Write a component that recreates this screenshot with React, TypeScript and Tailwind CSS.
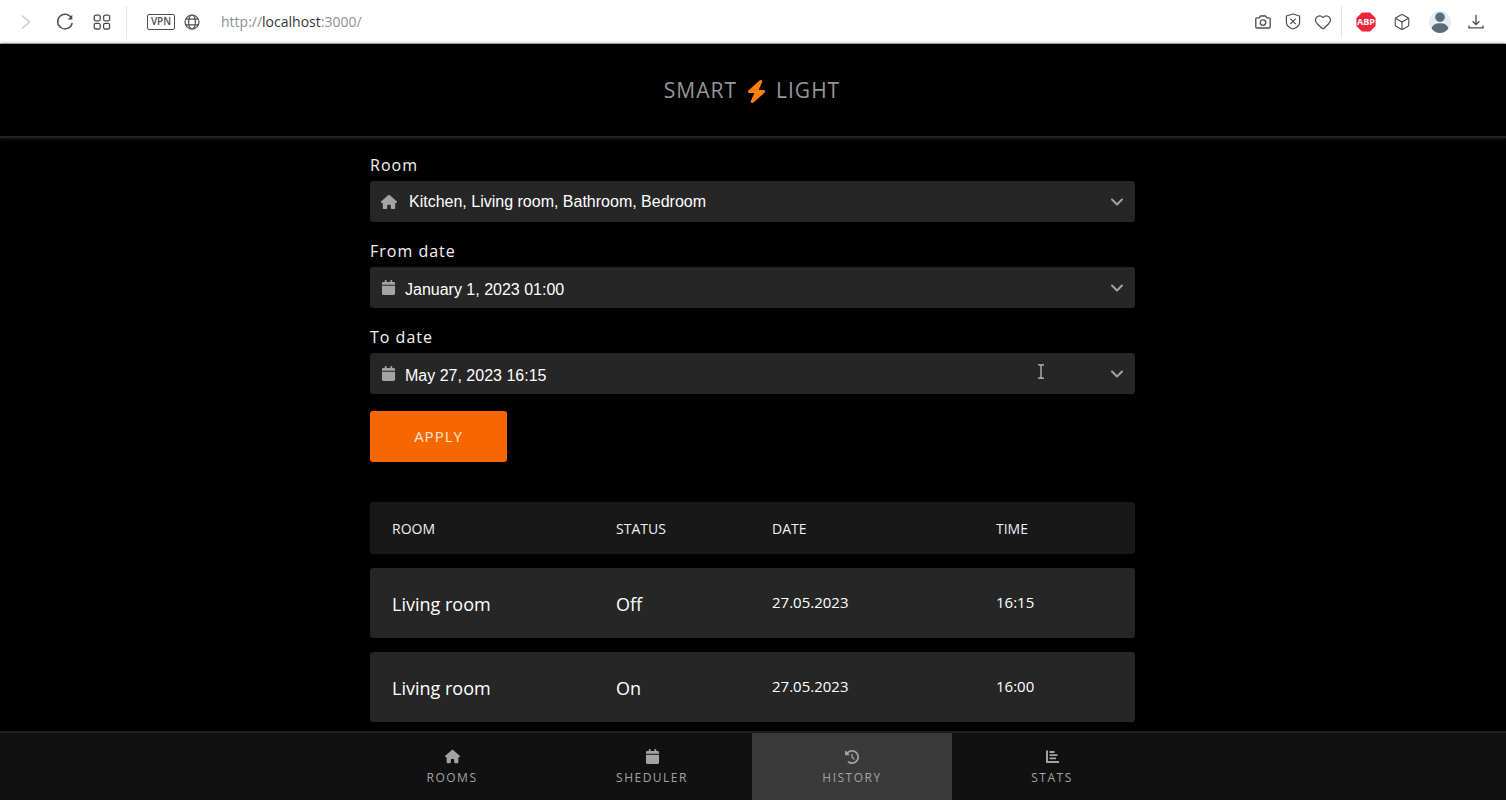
import type { ReactNode } from "react";
import { FaBolt, FaCalendar, FaClockRotateLeft, FaHouse } from "react-icons/fa6";
import { Box, ChevronDown, Heart } from "lucide-react";

const history = [
  { room: "Living room", status: "Off", date: "27.05.2023", time: "16:15" },
  { room: "Living room", status: "On", date: "27.05.2023", time: "16:00" },
];

function BrowserBar() {
  return (
    <div className="flex h-11 shrink-0 items-center justify-between border-b border-[#c4c4c4] bg-white pr-5 pl-4 text-[#4a4d52]">
      <div className="flex items-center">
        <button aria-label="Forward" className="flex h-5 w-5 items-center justify-center">
          <svg width="10" height="16" viewBox="0 0 10 16" fill="none" stroke="#c9c9c9" strokeWidth="1.3">
            <path d="M1 1.5 8.5 8 1 14.5" />
          </svg>
        </button>
        <button aria-label="Reload" className="ml-5 flex h-5 w-[18px] items-center justify-center">
          <svg width="18" height="18" viewBox="0 0 18 18" fill="none" stroke="currentColor" strokeWidth="1.4">
            <path d="M15.6 5.4A7.3 7.3 0 1 0 16.2 10" />
            <path d="M16.3 1.8v4.6h-4.6z" fill="currentColor" stroke="none" />
          </svg>
        </button>
        <button aria-label="Tabs" className="ml-4 flex h-5 w-6 items-center justify-center">
          <svg width="18" height="16" viewBox="0 0 18 16" fill="none" stroke="currentColor" strokeWidth="1.3">
            <rect x="1.2" y="1.2" width="6" height="5.6" rx="1.6" />
            <rect x="10.6" y="1.2" width="6" height="5.6" rx="1.6" />
            <rect x="1.2" y="9.4" width="6" height="5.6" rx="1.6" />
            <rect x="10.6" y="9.4" width="6" height="5.6" rx="1.6" />
          </svg>
        </button>
        <div className="ml-3 h-8 w-px bg-[#e4e4e4]" />
        <button className="ml-5 flex h-4 w-7 items-center justify-center rounded-xs border border-[#4a4d52] text-[10px] font-semibold">
          VPN
        </button>
        <button aria-label="Site information" className="ml-2 flex h-5 w-[18px] items-center justify-center">
          <svg width="16" height="16" viewBox="0 0 16 16" fill="none" stroke="currentColor" strokeWidth="1.2">
            <circle cx="8" cy="8" r="7" />
            <ellipse cx="8" cy="8" rx="3.4" ry="7" />
            <path d="M1.8 5.2h12.4M1.8 10.8h12.4" />
          </svg>
        </button>
        <a href="http://localhost:3000/" className="ml-5 text-sm text-[#8b9097]">
          http://<span className="text-[#33363a]">localhost</span>:3000/
        </a>
      </div>
      <div className="flex items-center">
        <button aria-label="Snapshot" className="flex h-5 w-5 items-center justify-center">
          <svg width="16" height="14" viewBox="0 0 16 14" fill="none" stroke="currentColor" strokeWidth="1.3">
            <path d="M1.8 2.8h2.4L5.4 1h5.2l1.2 1.8h2.4a1 1 0 0 1 1 1V12a1 1 0 0 1-1 1H1.8a1 1 0 0 1-1-1V3.8a1 1 0 0 1 1-1z" />
            <circle cx="8" cy="7.6" r="2.8" />
          </svg>
        </button>
        <button aria-label="Ad blocker" className="ml-[10px] flex h-5 w-5 items-center justify-center">
          <svg width="16" height="17" viewBox="0 0 16 17" fill="none" stroke="currentColor" strokeWidth="1.2">
            <path d="M8 1 14.6 3v6.4c0 3-2.6 5-6.6 6.6C4 14.4 1.4 12.4 1.4 9.4V3z" strokeLinejoin="round" />
            <path d="m5.2 5.6 5.6 5.6M10.8 5.6l-5.6 5.6" />
          </svg>
        </button>
        <button aria-label="Favourite" className="ml-[10px] flex h-5 w-5 items-center justify-center">
          <Heart size={18} strokeWidth={1.6} />
        </button>
        <div className="ml-2 h-8 w-px bg-[#e4e4e4]" />
        <button aria-label="Adblock Plus" className="ml-[14px] flex h-5 w-5 items-center justify-center">
          <svg width="20" height="20" viewBox="0 0 20 20">
            <path d="M6 .4h8L19.6 6v8L14 19.6H6L.4 14V6z" fill="#f0243a" />
            <text x="10" y="13.4" textAnchor="middle" fontSize="9" fontWeight="700" fill="#fff">
              ABP
            </text>
          </svg>
        </button>
        <button aria-label="Extensions" className="ml-4 flex h-5 w-5 items-center justify-center">
          <Box size={18} strokeWidth={1.5} />
        </button>
        <button aria-label="Profile" className="ml-4 flex h-6 w-6 items-center justify-center">
          <svg width="22" height="22" viewBox="0 0 22 22">
            <circle cx="11" cy="11" r="11" fill="#e3ebf4" />
            <circle cx="11" cy="6.2" r="4.8" fill="#5b6b7c" />
            <path d="M2.6 17.5c.8-3.7 4-5.3 8.400-5.300s7.600 1.600 8.400 5.300A11 11 0 0 1 11 22a11 11 0 0 1-8.400-4.500z" fill="#5b6b7c" />
          </svg>
        </button>
        <button aria-label="Downloads" className="ml-[14px] flex h-5 w-5 items-center justify-center">
          <svg width="16" height="16" viewBox="0 0 16 16" fill="none" stroke="currentColor" strokeWidth="1.3">
            <path d="M8 .8v9.700M4.600 7.200 8 10.600l3.400-3.400M1 11.500v2.300h14v-2.300" />
          </svg>
        </button>
      </div>
    </div>
  );
}

function StatsIcon() {
  return (
    <svg width="15" height="15" viewBox="0 0 15 15" fill="none" stroke="currentColor">
      <path d="M2 1.500V13h12" strokeWidth="2" />
      <path d="M4.500 3h5M4.500 6.200h8M4.500 9.400h6.500" strokeWidth="1.800" />
    </svg>
  );
}

function Field({ id, label, icon, children }: { id: string; label: string; icon: ReactNode; children: ReactNode }) {
  return (
    <div>
      <label htmlFor={id} className="block text-base leading-6 tracking-[1px] text-[#f4f4f4]">
        {label}
      </label>
      <div className="relative mt-1 flex h-[41px] items-center rounded-[3px] bg-[#262626] pr-2 pl-[11px] font-['Liberation_Sans',Arial,sans-serif] text-base text-white">
        {icon}
        {children}
        <ChevronDown size={20} strokeWidth={2.4} className="pointer-events-none shrink-0 text-[#a3a3a3]" />
      </div>
    </div>
  );
}

function TextCursor() {
  return (
    <svg
      className="pointer-events-none absolute top-[11px] right-[90px]"
      width="8"
      height="15"
      viewBox="0 0 8 15"
      fill="none"
      stroke="#c8c8c8"
      strokeWidth="1.2"
    >
      <path d="M1 .8h2.200L4 1.500l.8-.7H7M4 1.500v12M1 14.200h2.200l.8-.7.8.7H7" />
    </svg>
  );
}

function NavItem({ label, icon, active = false }: { label: string; icon: ReactNode; active?: boolean }) {
  return (
    <a
      href="#"
      aria-current={active ? "page" : undefined}
      className={
        active
          ? "flex flex-1 flex-col items-center justify-center gap-1 bg-[#3a3a3a] pt-1 text-[#a3a3a3]"
          : "flex flex-1 flex-col items-center justify-center gap-1 pt-1 text-[#a3a3a3]"
      }
    >
      {icon}
      <span className="text-xs leading-5 tracking-[1.5px]">{label}</span>
    </a>
  );
}

export default function App() {
  return (
    <div className="flex h-screen flex-col overflow-hidden bg-black font-['Open_Sans','Segoe_UI',sans-serif] text-white">
      <BrowserBar />

      <header className="flex h-[94px] shrink-0 items-center justify-center gap-2 border-b-2 border-[#222] pt-[2px] pr-[2px] text-[21px] tracking-[1px] text-[#979797] shadow-[0_1px_4px_#1c1c1c]">
        <span>SMART</span>
        <FaBolt size={23} className="text-[#ff7f0a]" />
        <span>LIGHT</span>
      </header>

      <main className="min-h-0 flex-1 overflow-hidden pt-[15px] pr-[17px] pl-4">
        <div className="mx-auto max-w-[765px]">
          <form className="flex flex-col items-start gap-[17px] *:w-full">
            <Field id="room" label="Room" icon={<FaHouse size={16} className="shrink-0 text-[#a3a3a3]" />}>
              <select id="room" className="ml-3 h-full min-w-0 flex-1 appearance-none bg-transparent outline-none">
                <option>Kitchen, Living room, Bathroom, Bedroom</option>
              </select>
            </Field>
            <Field id="from" label="From date" icon={<FaCalendar size={15} className="shrink-0 text-[#a3a3a3]" />}>
              <input
                id="from"
                defaultValue="January 1, 2023 01:00"
                className="ml-[9px] h-full min-w-0 flex-1 bg-transparent pt-1 outline-none"
              />
            </Field>
            <Field id="to" label="To date" icon={<FaCalendar size={15} className="shrink-0 text-[#a3a3a3]" />}>
              <input
                id="to"
                defaultValue="May 27, 2023 16:15"
                className="ml-[9px] h-full min-w-0 flex-1 bg-transparent pt-1 outline-none"
              />
              <TextCursor />
            </Field>
            <button
              type="button"
              className="h-[51px] max-w-[137px] rounded-[3px] bg-[#f76700] text-[15px] tracking-[1px] text-[#ffe9d6]"
            >
              APPLY
            </button>
          </form>

          <table className="mt-[26px] w-full table-fixed border-separate border-spacing-x-0 border-spacing-y-[14px] text-left">
            <colgroup>
              <col className="w-[224px]" />
              <col className="w-[156px]" />
              <col className="w-[224px]" />
              <col />
            </colgroup>
            <thead>
              <tr className="h-[52px] bg-[#181818] text-sm text-[#f0f0f0] *:pt-[2px] *:pl-[22px] *:font-normal">
                <th className="rounded-l-[3px]">ROOM</th>
                <th>STATUS</th>
                <th>DATE</th>
                <th className="rounded-r-[3px]">TIME</th>
              </tr>
            </thead>
            <tbody>
              {history.map((entry) => (
                <tr key={entry.time} className="h-[70px] bg-[#262626] text-white *:pl-[22px]">
                  <td className="rounded-l-[3px] pt-[2px] text-lg">{entry.room}</td>
                  <td className="pt-[2px] text-lg">{entry.status}</td>
                  <td className="pb-[2px] text-[15px]">{entry.date}</td>
                  <td className="rounded-r-[3px] pb-[2px] text-[15px]">{entry.time}</td>
                </tr>
              ))}
            </tbody>
          </table>
        </div>
      </main>

      <nav className="flex h-[69px] shrink-0 justify-center border-t-2 border-[#1e1e1e] bg-[#111] pr-[2px]">
        <div className="flex w-full max-w-[800px]">
          <NavItem label="ROOMS" icon={<FaHouse size={15} />} />
          <NavItem label="SHEDULER" icon={<FaCalendar size={15} />} />
          <NavItem label="HISTORY" icon={<FaClockRotateLeft size={14} />} active />
          <NavItem label="STATS" icon={<StatsIcon />} />
        </div>
      </nav>
    </div>
  );
}
